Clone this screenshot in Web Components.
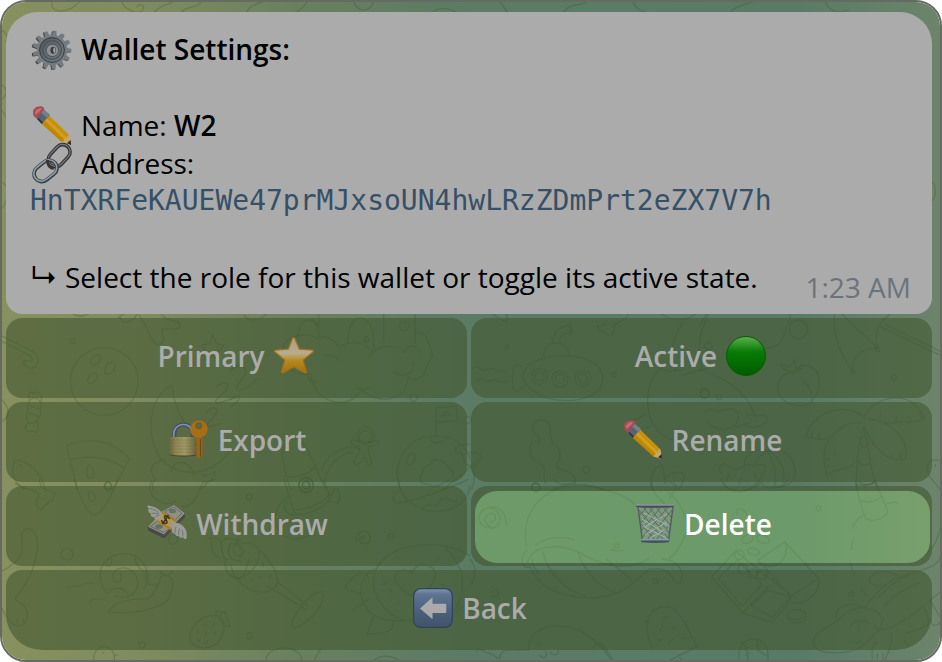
<!DOCTYPE html>
<html lang="en">
<head>
<meta charset="utf-8">
<meta name="viewport" content="width=device-width, initial-scale=1">
<title>Wallet Settings</title>
<style>
  body {
    margin: 0;
    background: #fff;
    font-family: "Open Sans", "DejaVu Sans", sans-serif;
    font-size: 28px;
  }
  .arrow {
    width: 28px;
    font-family: Inter, "Noto Sans CJK JP", sans-serif;
  }
</style>
</head>
<body>

<chat-window>
  <chat-message time="1:23 AM">
    <message-line><emoji-icon name="gear"></emoji-icon><b>Wallet Settings:</b></message-line>
    <message-line></message-line>
    <message-line><emoji-icon name="pencil"></emoji-icon><span>Name: <b>W2</b></span></message-line>
    <message-line><emoji-icon name="link"></emoji-icon><span>Address:</span></message-line>
    <message-line><wallet-address value="HnTXRFeKAUEWe47prMJxsoUN4hwLRzZDmPrt2eZX7V7h"></wallet-address></message-line>
    <message-line></message-line>
    <message-line><span class="arrow">↳</span><span>Select the role for this wallet or toggle its active state.</span></message-line>
  </chat-message>
  <inline-keyboard>
    <keyboard-button>Primary<emoji-icon name="star"></emoji-icon></keyboard-button>
    <keyboard-button>Active<emoji-icon name="circle"></emoji-icon></keyboard-button>
    <keyboard-button><emoji-icon name="lock"></emoji-icon>Export</keyboard-button>
    <keyboard-button><emoji-icon name="pencil"></emoji-icon>Rename</keyboard-button>
    <keyboard-button><emoji-icon name="money"></emoji-icon>Withdraw</keyboard-button>
    <keyboard-button active><emoji-icon name="basket"></emoji-icon>Delete</keyboard-button>
    <keyboard-button wide><emoji-icon name="back"></emoji-icon>Back</keyboard-button>
  </inline-keyboard>
</chat-window>

<script>
  // Repeats a shape around the centre of a 40x40 icon
  function spokes(count, shape) {
    let out = "";
    for (let i = 0; i < count; i++) {
      out += `<g transform="rotate(${(360 / count) * i + 8} 20 20)">${shape}</g>`;
    }
    return out;
  }

  const icons = {
    gear: `
      <defs><linearGradient id="g" x2="1" y2="1"><stop stop-color="#50565b"/><stop offset="1" stop-color="#7b8389"/></linearGradient></defs>
      <g fill="#3f3c39" transform="translate(-1 .6)">${spokes(13, '<path d="M17.6 7 18.4.6h3.2L22.4 7z"/>')}</g>
      <g fill="#737b80">${spokes(13, '<path d="M17.4 7 18.4.6h3.4L22.8 7z"/>')}</g>
      <circle cx="20" cy="20" r="15.2" fill="#747c81"/>
      <circle cx="20" cy="20" r="12.4" fill="url(#g)" stroke="#34383b" stroke-width="1"/>
      <circle cx="20" cy="20" r="9.4" fill="none" stroke="#50575b" stroke-width="1.6"/>
      <circle cx="20.4" cy="20.4" r="6.2" fill="#8b9297" stroke="#40464a" stroke-width=".8"/>
      <ellipse cx="21.2" cy="20.2" rx="2.8" ry="3.5" fill="#3f3833"/>
      <path d="M21.9 17.2c2 1 2.1 4.9.3 6-1.2-1.6-1.4-4.2-.3-6z" fill="#a3a7aa"/>`,
    pencil: `
      <defs><linearGradient id="p" x1="1" y1="0" x2="0" y2="1"><stop stop-color="#d99f14"/><stop offset=".5" stop-color="#c58c06"/><stop offset="1" stop-color="#a66d00"/></linearGradient></defs>
      <path d="M9 17.2 16.6 9 37.4 29.2 30 36.2z" fill="url(#p)"/>
      <path d="m12 13.8 2-2.2 20.8 20-2.1 2z" fill="#d0a021"/>
      <path d="m29.8 36.2 2-1.4.7-2 2.2-.8.6-1.9 2.1-1.1 1.7 10.3z" fill="#c7a66a"/>
      <path d="m35 37.3 3.6-3.4.5 5.1z" fill="#2e2b29"/>
      <path d="m3.8 11.8 7.8-8.4 6.4 5.6-8.4 9z" fill="#5b6369"/>
      <path d="m8.8 6.3 2.8-2.9 6.4 5.6-2.9 3z" fill="#71818e"/>
      <path d="m5.4 13 1-1.1 4.6 4.3-1.4 1.5z" fill="#303438"/>
      <path d="M1 7C.5 2.5 5.5-.7 10.5.7c1.4.8 2 1.8 1.7 3.1l-8 8C2.3 11.3 1.1 9.5 1 7z" fill="#a84a51"/>
      <path d="M3.2 5.5C4.5 3 7.5 1.6 9.8 2c.7.8-5.2 6.8-6.2 6.5-.7-.7-.8-1.7-.4-3z" fill="#c46d70"/>`,
    link: `
      <g fill="none" transform="translate(0 -1)">
        <g transform="rotate(-47 27 13)"><rect x="14.8" y="5.6" width="25" height="14.8" rx="7.4" stroke="#393334" stroke-width="3.6"/><rect x="15" y="5.4" width="25" height="14.8" rx="7.4" stroke="#737a83" stroke-width="1.2"/></g>
        <g transform="rotate(-38 13 28)"><rect x="1" y="20.5" width="25" height="15.5" rx="7.75" stroke="#3d454c" stroke-width="3.8"/><rect x="1" y="20" width="25" height="15.5" rx="7.75" stroke="#93a0aa" stroke-width="1.5"/></g>
        <path d="M15.4 17c.2 4.5 2 8 6.3 8.4" stroke="#3a3334" stroke-width="3"/>
      </g>`,
    star: `
      <defs><linearGradient id="s" x2="0" y2="1"><stop stop-color="#b09b81"/><stop offset=".45" stop-color="#b8ac8e"/><stop offset=".65" stop-color="#b38b20"/><stop offset="1" stop-color="#a56d0c"/></linearGradient></defs>
      <path d="M19.6 1.5c.5 0 1 .5 1.4 1.4l4.2 10.2 13 1.1c1.4.2 1.4 1.2.4 2L29 24.1l3.3 11.3c.3 1.4-.5 1.8-1.5 1.2L20 30.8 9.1 36.6c-1 .6-1.8-.1-1.5-1.2l3.1-11.3L1.2 16c-1-.8-.6-1.7.6-1.8l12.6-1.1L18.2 3c.3-1 .8-1.5 1.4-1.5z" fill="url(#s)" stroke="#a7701f" stroke-width="1.2"/>`,
    circle: `
      <defs><linearGradient id="c" x2="0" y2="1"><stop stop-color="#4ea642"/><stop offset=".4" stop-color="#077b05"/><stop offset="1" stop-color="#005b00"/></linearGradient><linearGradient id="h" x2="0" y2="1"><stop stop-color="#5cac4e"/><stop offset="1" stop-color="#0a7b05" stop-opacity="0"/></linearGradient></defs>
      <circle cx="20" cy="20" r="19.5" fill="url(#c)" stroke="#055d04"/>
      <ellipse cx="20" cy="9.5" rx="14" ry="8" fill="url(#h)"/>`,
    lock: `
      <defs><linearGradient id="l"><stop stop-color="#6e6741"/><stop offset=".2" stop-color="#8f8552"/><stop offset=".55" stop-color="#a09b69"/><stop offset="1" stop-color="#655e38"/></linearGradient></defs>
      <path d="M5.3 18v-4.5c0-12 18.5-12 18.5 0V18" fill="none" stroke="#424e65" stroke-width="4.2"/>
      <path d="M4.8 18v-4.5c0-11 18-12.5 18.3-1" fill="none" stroke="#8291ad" stroke-width="1.6"/>
      <path d="M1 17h27v18c-3 1.8-24 1.8-27 0z" fill="url(#l)"/>
      <path d="M1.5 20h25m-25 3h25m-25 3h25m-25 3h25m-25 3h25" stroke="#6d683f" stroke-opacity=".35" stroke-width="1"/>
      <path d="M1 34.8c5 1.8 22 1.8 27 0" fill="none" stroke="#4d4327" stroke-width="1.2"/>
      <path d="m27.5 16 6 2v19l-2.5 1.4-3.7-2.3v-2l1.2-1-1.2-1.2v-2l1.3-1-1.3-1.2v-2l1.3-1.2-1.3-1z" fill="#9b6516"/>
      <path d="M31.5 19v18" stroke="#704817" stroke-width="1.1"/>
      <path fill-rule="evenodd" d="M30.2.4c5 0 8.6 3.8 8.4 8.8-.2 4.8-3.2 8.4-8.5 8.6-5.4 0-8.7-3.6-8.8-8.3C21.2 4.4 25 .4 30.2.4zm-.5 2.4a3 3 0 1 0 0 6 3 3 0 0 0 0-6z" fill="#a86e16"/>
      <circle cx="29.8" cy="5.8" r="3.1" fill="none" stroke="#735020" stroke-width=".8"/>`,
    money: `
      <path d="M15 8 26.8 1.3 38 8.5v4.8L17.2 34.6 1 26.5v-3.2z" fill="#494949"/>
      <path d="M15 7.5 27 1l11 8.3-21 21.2L1 22.8z" fill="#8d9183"/>
      <path d="M17.5 7.8 27 3l8 6.3L28 16zM3.7 22.4 11 16.7l12.3 7.2-6.5 4.7z" fill="none" stroke="#64695f" stroke-width=".9"/>
      <ellipse cx="25.6" cy="7" rx="3.6" ry="2.3" fill="#687163"/><ellipse cx="12" cy="22.6" rx="3.8" ry="2.4" fill="#686c66"/>
      <path d="M14.7 7.7 30 16.3l-6.4 9.5L9.4 17.5z" fill="#ad985f"/>
      <path d="m14.8 7.6 15.4 8.6-1.3 1.7-15.2-8.6zM10.3 16l15 8.5-1.6 1.6-14.3-8.6z" fill="#b17a16"/>
      <g transform="translate(18.5 15.5) rotate(35)"><path d="M3-2.6c-1.5-1.6-5.5-1.3-5.5.6 0 2.2 5.5 1.6 5.5 4 0 2-4.3 2.4-6 .8M0-5.2V5.4" fill="none" stroke="#423718" stroke-width="1.6"/></g>
      <path d="M15.5 9.8C12.4 4.8 7.8 2.3 1.5 1.4c-2.5 0-.5 2.7 1 3.7C.3 5.3.8 8.1 4 9.7c-1 2 .8 3.7 3.4 3.6-.1 2.3 2.7 3.1 4.8 1.4z" fill="#999b96"/>
      <path d="M3 4.5c3.2.5 5.2 1.6 8.2 3.8M4.5 9.3c2.8.1 4.8-.2 7.6.6M8 13c1.1-1 2.7-1.5 4.2-1.7" fill="none" stroke="#717571"/>
      <path d="M25 18.8c5.5-1 11.3 1.7 14 7.5 1 3.2 1 6.2.4 8.4-1.5 1-2.8-.7-3.6-1.8-1 2-2.7.8-4-1.2-1.4 1.5-3.3-.1-3.9-2.1-2.2.4-3.8-2.1-3.2-4.5z" fill="#999b96"/>
      <path d="M28 29c-.3-2.3.1-4.3 1.2-6.1m2.6 8.2c-.4-3 0-4.5.6-6.6m3.5 8.1c0-2.7 0-4.4-.7-6.6" fill="none" stroke="#70736f"/>`,
    basket: `
      <path d="M3 3 7.5 37h26L38 3" fill="#a8a8b0" fill-opacity=".18" stroke="#555a60" stroke-width="1.4"/>
      <g fill="none" stroke="#65636e" stroke-width="1">
        <path d="m3 5 27 32M5 19l16 18M8 3l25 31M14 3l20 26M21 3l14 18M28 3l8 10M38 5 11 37m24-17L20 37M33 3 7 34M26 3 6 27M19 3 5 20M12 3 4 12"/>
      </g>
      <g fill="none" stroke="#a9b2b9" stroke-width=".9"><path d="m7 15 23 14M8 22l23 12M9 9l25 13M32 10 9 23m23-5L10 31m21-6-16 9"/></g>
      <path d="M5.8 35.5h28.5l-.6 2.8c-7 .8-20 .8-27.3 0z" fill="#43505e"/><path d="M6 35.7h28" stroke="#8c99a8" stroke-width="1.5"/>
      <path d="M1 1h38v1.7c-2.3 1.4-35 1.4-38 0z" fill="#454d56"/><path d="M1 1h38" stroke="#8995a3" stroke-width="1.3"/>`,
    back: `
      <defs><linearGradient id="b" x2="0" y2="1"><stop stop-color="#8397ae"/><stop offset=".14" stop-color="#5e7593"/><stop offset=".55" stop-color="#4c617c"/><stop offset="1" stop-color="#41536b"/></linearGradient></defs>
      <rect x=".6" y=".6" width="38.8" height="38.8" rx="7.5" fill="url(#b)" stroke="#30435d" stroke-width="1.2"/>
      <path d="M7 20.4 19.5 9.3v6.4h13c.5 0 .8.3.8.8v7.8c0 .5-.3.8-.8.8h-13v6.2z" fill="#aaa"/>`
  };

  class EmojiIcon extends HTMLElement {
    constructor() {
      super();
      const shadow = this.attachShadow({ mode: "open" });
      shadow.innerHTML = `
        <style>
          :host { display: block; flex: none; width: 44px; height: 40px; }
          svg { display: block; width: 100%; height: 100%; overflow: visible; }
        </style>
        <svg viewBox="-2 0 44 40" aria-hidden="true">${icons[this.getAttribute("name")] || ""}</svg>
      `;
    }
  }

  class WalletAddress extends HTMLElement {
    constructor() {
      super();
      const shadow = this.attachShadow({ mode: "open" });
      shadow.innerHTML = `
        <style>
          :host { display: block; min-width: 0; }
          code {
            display: block;
            font: 28px/36px "DejaVu Sans Mono", monospace;
            color: #365067;
            overflow-wrap: anywhere;
          }
        </style>
        <code></code>
      `;
      shadow.querySelector("code").textContent = this.getAttribute("value");
    }
  }

  class MessageLine extends HTMLElement {
    constructor() {
      super();
      const shadow = this.attachShadow({ mode: "open" });
      shadow.innerHTML = `
        <style>
          :host {
            display: flex;
            align-items: flex-start;
            gap: 7px;
            min-height: 38px;
            line-height: 36px;
          }
          ::slotted(emoji-icon) { margin: -1px 0; }
        </style>
        <slot></slot>
      `;
      this.querySelectorAll("b").forEach((b) => (b.style.fontWeight = 600));
    }
  }

  class ChatMessage extends HTMLElement {
    constructor() {
      super();
      const shadow = this.attachShadow({ mode: "open" });
      shadow.innerHTML = `
        <style>
          :host {
            display: grid;
            padding: 19px 21px 8px 24px;
            border-radius: 32px 32px 16px 16px;
            background: #ababab;
            color: #000;
          }
          .body, time { grid-area: 1 / 1; }
          .body { padding-bottom: 9px; min-width: 0; }
          time {
            place-self: end;
            color: #6b747c;
            line-height: 38px;
          }
        </style>
        <div class="body"><slot></slot></div>
        <time></time>
      `;
      shadow.querySelector("time").textContent = this.getAttribute("time");
    }
  }

  class KeyboardButton extends HTMLElement {
    constructor() {
      super();
      const shadow = this.attachShadow({ mode: "open" });
      shadow.innerHTML = `
        <style>
          :host {
            --key: rgba(66, 86, 47, 0.58);
            display: grid;
            border-radius: 16px;
            overflow: hidden;
          }
          :host([wide]) {
            grid-column: 1 / -1;
            border-radius: 16px 16px 36px 36px;
          }
          button {
            display: flex;
            align-items: center;
            justify-content: center;
            gap: 7px;
            padding: 18px 0 22px;
            border: 0;
            background: var(--key);
            color: #ababab;
            font: inherit;
            font-weight: 600;
            line-height: 40px;
            cursor: pointer;
          }
          :host([active]) { padding: 5px 2px 3px 4px; }
          :host([active]) button {
            padding: 13px 0 19px;
            border-radius: 22px;
            background: rgba(155, 224, 116, 0.3);
            box-shadow: 0 0 0 16px var(--key);
            color: #fff;
          }
        </style>
        <button type="button"><slot></slot></button>
      `;
    }
  }

  class InlineKeyboard extends HTMLElement {
    constructor() {
      super();
      const shadow = this.attachShadow({ mode: "open" });
      shadow.innerHTML = `
        <style>
          :host {
            display: grid;
            grid-template-columns: 1fr 1fr;
            gap: 4px;
            margin-top: 4px;
          }
        </style>
        <slot></slot>
      `;
    }
  }

  // Doodle wallpaper, drawn in tiles at three times their shown size
  class ChatWallpaper extends HTMLElement {
    constructor() {
      super();
      const shadow = this.attachShadow({ mode: "open" });
      const tile = (x, y, shapes) => `<g transform="translate(${x} ${y}) scale(.33333)">${shapes}</g>`;
      shadow.innerHTML = `
        <style>
          :host {
            display: block;
            background: linear-gradient(90deg, #87905e, #808c60 14%, #68805f 32%, #5b7b65 50%, #597b66 85%, #6c846b);
          }
          svg { display: block; width: 100%; height: 100%; }
          g { fill: none; stroke: #284b1e; stroke-width: 4; stroke-linecap: round; stroke-linejoin: round; }
          svg > g { stroke-opacity: 0.24; }
        </style>
        <svg viewBox="0 0 942 662" preserveAspectRatio="xMidYMid slice" aria-hidden="true">
          ${tile(0, 0, `
            <path d="M152 0c-8 25 18 38 55 22 20-12 25-22 30-22M360 0c10 22 40 40 60 30 16-12 0-30-14-14M455 38c20-30 48-25 60-38M600 0c-12 25-50 10-62 38M735 38c8-26 34-30 55-38M920 0c-10 20-30 32-44 38M1060 0c10 34 50 34 60 0M1290 38c20-22 60-22 84 0M1500 0l26 38M1690 38c18-40 60-20 70-38M1900 0c8 20 30 34 60 38M2190 38c10-20 50-30 80-38M2480 0c10 30 40 38 70 26M0 88c14 8 18 20 12 34M0 250c16 14 18 30 0 44M0 330c10 8 14 20 14 32M0 545c22 6 18 60 0 78M2800 540c18 20 16 60-10 66"/>
          `)}
          ${tile(0, 310, `
            <circle cx="308" cy="215" r="102"/><circle cx="213" cy="93" r="8"/>
            <ellipse cx="282" cy="150" rx="12" ry="18" transform="rotate(45 282 150)"/><ellipse cx="325" cy="175" rx="13" ry="21" transform="rotate(35 325 175)"/><ellipse cx="272" cy="206" rx="11" ry="18" transform="rotate(40 272 206)"/>
            <path d="M0 94 80 134c20 14 8 24-6 18-14-2-12 14 2 20 34 14 42-26 20-46L0 78M200 0c24 26 52 20 70 4M355 20c8 26 38 18 52-8M380 5c-10 8-26 10-30 20M412 14c30 36 38 90 58 90 28-4 12-34 10-44 12-10 60 6 56-16-2-20-38 0-60-38"/>
            <path d="M78 296c-4-40 38-38 40-10 2 38-14 58-36 54-12-6-6-24-4-44zM84 270c-10-16 0-30 12-18 10-12 28-2 22 22M80 338c-20 20-4 32 12 26 12 10 24-4 14-28M80 286l36 14M78 308l34 14M0 270c22 22 26 52 0 64"/>
            <path d="m197 420-2-10c54-26 130-26 188 36l-6 14M197 420l30 120M377 460l-42 80M206 450c56-14 110-10 160 24"/><path d="M262 466c12 8 24 40 6 40-20 0-14-26-6-40zM318 516c12 6 18 20 8 24-18 2-24-14-8-24z"/>
            <path d="M130 540c-10-50-64-96-92-86-18 40 6 72 30 86M56 466v4"/>
            <path d="M510 228C440 260 430 380 480 450c60 60 150 50 210-28M512 230c8 60 30 130 100 150M490 450c-50 10-46 40-26 60-18 8-8 30-10 30M510 488c0-40 62-40 68 10M600 494c14 16 34-10 42-6-2 30-30 28-40 52"/>
            <path d="m602 106 24-6 8-26 12 26 22 6-16 18 2 28-22-14-20 12 2-24zM645 232c30-24 44-14 28 12l-30 30c-4 18 40-8 64-10M690 180l40-20M616 306c28-22 42-10 24 14l-24 26c4 16 30-6 46-4"/>
          `)}
          ${tile(230, 310, `
            <path d="M40 16c14 22 52 16 72-12M200 80c10-70 64-60 64-20M205 62c8-44 54-42 58 0M264 0v80M352 100c-2-100 70-100 78-10v28M460 0v92M555 0v100"/><circle cx="408" cy="88" r="7"/><circle cx="522" cy="48" r="14"/>
            <path d="M156 112c20-48 96-40 104-26 24-14 54 6 64 26 46-28 84-10 104 16 28-24 76-26 94 0 10-30 36-24 46 0M415 144c14-34 60-38 76-34M160 110c-20 50 24 90 78 82M240 190c6 90 116 120 154 48 40 50 140 40 140-42M235 192c-10 10 4 28 22 24M282 138c20-6 36 0 42 14M375 232c10 12 36 6 42 2M490 185c20 24 66 10 58-26M555 68c40-8 34 30 48 50 12 30-12 36-16 60-8 38-48 36-54 18"/>
            <path d="M0 180c14-28 60-10 40 18L18 230c-2 16 32 14 60-24M0 270c10-16 38-14 20 4L0 292"/><circle cx="550" cy="264" r="11"/>
            <path d="M618 384v-90l62-4 2 42-64 6M634 318l14-14 14 12-28 4"/><circle cx="712" cy="332" r="11"/>
            <circle cx="405" cy="378" r="26"/><circle cx="405" cy="382" r="19"/><path d="M388 396c-14 4-20-10-26-2-4 10 14 20 24 16v20c-14 12-10 28-16 30 4 12 22 6 32-20 10 4 0 26 18 28 6-10-2-30-6-38V410c14 2 34-8 30-16-10-6-18 6-28 4"/>
            <path d="M510 540c-30-80 20-160 104-162 60 0 96 34 106 70M600 384c-2 20 44 22 46 0M530 460c0-30 24-36 26-20 0 14-22 38-26 20zM570 500c14-14 0-28 32-36 10-24 46-10 48 6 28 8 20 40 4 46-22-2-20 20-46 16-20-16-44 0-38-32zM720 404c-30-2-54 10-40 24 30 2 14 40 40 40M640 540l80-66"/>
            <path d="M155 430c0-40 50-70 80 0l50 110M155 430c0 30 10 80 26 110M160 500c40 8 80-6 102-40M274 480c20-60 80-76 120-60M282 520c8-50 40-86 84-92"/><circle cx="226" cy="526" r="22"/><circle cx="226" cy="526" r="11"/>
          `)}
          ${tile(470, 310, `
            <path d="M160 200c0-80 240-90 240 6 0 90-220 90-240-6zM222 138c0-50 72-56 76 0M250 96c2-26 14-44 28-44l24-8 4 28-20-2c-12 2-18 16-18 24M158 170c-34-20-30 20-30 64 10 24 34-6 40-8M10 176c16-16 24 14 46 2 18-10 20 14 54 6M22 212c16-14 20 12 42 0 20-8 18 10 46 4"/>
            <circle cx="209" cy="200" r="24"/><circle cx="209" cy="200" r="14"/><circle cx="271" cy="207" r="24"/><circle cx="271" cy="207" r="14"/><circle cx="340" cy="206" r="24"/><circle cx="340" cy="206" r="14"/><circle cx="112" cy="112" r="6"/><circle cx="433" cy="195" r="7"/>
            <path d="M485 0c-8 24-40 40-52 44 8 30-18 40-24 26-8-10-30-4-24-22 16 6 10-10 26-6M68 12l42 26 2-26M564 0c36 40 92 34 120 8"/>
            <path d="M640 40c-40 60-40 120-20 140M570 180c-60 60-40 190 40 210M560 160c4 24 50 28 76 20M480 330c20 4 40-10 50-20M480 358c30 2 60-4 76-14M720 14c-40 60-30 130-20 166M640 196l80-22"/><circle cx="708" cy="252" r="13"/>
            <path d="M188 360c-2-40 60-40 54 10 0 40 24 30 30 64 0 30-30 36 14 50 30 8 34 24 30 40M188 360c10 24 26 20 20 40-38-16-34 44-10 54 44 16 16 44 30 68"/><circle cx="350" cy="480" r="10"/><circle cx="198" cy="534" r="13"/>
            <path d="M552 540c-20-30 0-60 26-76l12 60c-14-30 40-44 54-30 2 20-6 34-14 46M0 430c20-2 40 4 30 20-14 10-14 30-30 20M0 470c16 20 16 50 4 70M250 540c30-20 110-20 150 0"/>
          `)}
          ${tile(700, 310, `
            <path d="M0 178c70 24 140 60 168 136M200 114c60 4 58-60 74-86 0-24 0-28 0-28M0 50 28 4M410 0c-12 80 20 140 52 182 0-40 30-70 72-66M430 10c30 40 70 60 108 106-12-40 0-80 40-106M546 50l180 86M560 44l166 80"/><circle cx="300" cy="58" r="28"/><circle cx="463" cy="186" r="6"/><circle cx="538" cy="118" r="7"/><circle cx="587" cy="204" r="8"/><circle cx="17" cy="252" r="13"/><circle cx="60" cy="262" r="8"/><circle cx="28" cy="108" r="11"/>
            <path d="M280 190c-60 0-60 92 18 98 70 0 76-90 50-110-24-18-46-12-62 4M312 208c16 20 28 30 28 66M244 164l30 8 14-22 4 28 20-2-28 14-28-12z"/>
            <path d="M14 312c10-10 18-18 40-8 20 2 30-10 50-6 40 20-8 100-80 40M142 316c10-6 30 8 38 2 40-6 28 16 12 26-10 10-40 12-50 2M110 354c12-6 24-8 40-14"/>
            <path d="M498 322c-60-44-150-20-176 58 30 16 50 4 72 8-30 40-16 84-8 110 20-24 60-10 80-36M486 340c-40-6-70 20-92 48M498 320c30-60 140-90 180 4-20 20-70 10-100 16-28 0-50-10-80-14M510 326c60 8 120 50 114 120-50 20-100-30-126-96M496 352c-20 60-20 120-22 188M498 356c14 60 16 130 40 184M340 368v16M362 372v14M382 446l14 8M378 468l14 4M406 430l10 10M548 312l-4 12M594 322v12M630 318l6 10M664 312l6 10M578 432v12M608 428v16M478 386c14 8 16 0 24-14M484 406c10 10 20 10 30-4M476 456c14 14 30 12 40 4M478 512c14 20 40 16 50 4"/>
            <path d="M64 490c-8-40 20-28 40-10 20 4 20-20 60-12 40-8 40 4 28 30-40 62-90 60-116 30M136 480c-6-40 30-70 70-56 60-20 100 46 76 90-20 24-40 20-62 18M172 462c4-20 20-30 34-38 24 40 26 70 22 106M212 424c30 24 50 50 42 94M90 492l-6 20M126 506l-4 16M166 492l8 16"/>
            <path d="M726 454c-30-10-46 10-34 44l34 42M712 466v6"/>
          `)}
          ${tile(0, 480, `
            <path d="M218 0c14 50 40 110 62 108 30-12 50-66 70-108M262 38c10-12 30 20 12 28-16 2-14-18-12-28zM316 8c22-4 10 32-2 24-10-4-6-14 2-24zM40 12c30 22 70 16 72 40-20 24 0 44 8 38 10-20 40-24 40-50-28-14-40 0-48-40M450 6c-20 50 40 80 72 60M540 80c40 14 60-60 64-70l40-10"/>
            <path d="M60 160c50-50 80 80-20 198 0 14 40 14 36 56-4 30-36 36-50 14-14-20-20-20-26-40M58 162c4 40 10 70-30 96-10 10-20 14-28 18M46 434v-12M66 432l-2-10"/><circle cx="196" cy="225" r="18"/><circle cx="515" cy="181" r="14"/>
            <path d="M318 344c-50-60-10-120 50-120 60-4 90 70 60 104M340 352c60 20 88-40 56-72-30-26-64-10-62 18 8 26 36 6 22-14M434 264c-6 70 10 50 32 52 0 20-20 46-34 44-40 0-90 6-112 38 40 10 150 0 180-36 20-40 20-60-2-74-30 0-18 20-32 40M402 232c-4 20 14 44 30 44M320 346c6-24 50-24 58 0M308 248c6 20 26 22 22-16M492 290l-16-12M500 290l16-14M200 330c10-20 30 0 40-10 10-10 20-8 36-8M264 370c10-22 18 2 46-12"/>
            <path d="M566 482c0-40 30-70 68-72 50 0 40 58 10 88-30 16-68 12-78-16zM646 408c-4-10 4-16 12-8 24-6 16 20 30 42-20 6-32-16-36-30M672 398l-20 16M590 456v8M614 434l-2 8M640 434l-4 8M616 460l-2 8M644 460l-4 8M590 484l6 4M620 484l-2 8"/><circle cx="422" cy="499" r="9"/>
            <path d="M276 546c-2-60 70-52 62 0M338 530h10M304 522v2M620 180c20-10 30 0 42 8 14-20 30-4 58-4M630 188c0 40 14 40 26 48M660 190c0 30 10 56 20 50M675 240c-10 30 10 60 45 60M686 196c-10 30 0 50 34 50"/>
          `)}
          ${tile(230, 480, `
            <path d="m160 0 30 104c40 8 90-18 110-50L276 0M190 92c30 0 80-14 104-44M300 54c20-60 34 0 24 18-20-4-24-4-34-8M180 50c-60 20-66 120 10 130 40 0 60-20 70-40M190 110c-30-10-40-30-20-46M504 0c10 120 200 130 216 20M504 36c-30 20-10 40 10 34 60-10 160-50 200-70M576 88c30-30 30 10 50-18 24-34 34 6 54-4"/><circle cx="226" cy="18" r="22"/><circle cx="226" cy="18" r="11"/><circle cx="55" cy="53" r="9"/><circle cx="55" cy="471" r="9"/><circle cx="482" cy="171" r="8"/>
            <path d="M378 186c-4-40 44-40 42-4-6 20-34 14-32-4 4-8 10-6 12 0"/>
            <path d="M720 230c-90-60-280-40-290 70-8 50 40 110 90 124 80 10 140 0 200-60M432 270c-60 30-50 110 0 140 30 16 60 16 90 16M644 204c60 60 70 120 30 190M546 352c-90-50-44-100 0-70 10-40 80-30 68 16-8 30-30 34-68 54zM414 300c-8-40-50-10-70 24 10 20 30 10 50 20M430 408l-20 60c30-4 90-2 78-44M366 394l50-34M456 316l16-4M476 332l10 8M500 376l10-10M614 250l14-14M630 316l16 4"/>
            <path d="M0 260c10 40 40 80 100 80 60-10 50-60-16-130C60 184 20 190 0 194M20 300c30-8 70-40 64-86M0 290c24 16 40 10 54-50M8 208c0-20 20-12 18 0 20 0 12 20-2 24-14-2-20-20-16-24zM20 170c0 14-4 20 0 30M140 310c60 40 74 60 90 70M126 332c60 34 70 44 100 60M274 340c-30-10-100 80-90 104 30 14 110-70 90-104zM66 300l-8 8M92 292l-8 4M120 288l-4 8M96 250v12M110 322l8 4"/>
            <path d="M106 546c0-50 104-52 108 0M270 510l-20 36M430 546c24-20 50-16 80 0"/>
          `)}
          ${tile(470, 480, `
            <path d="M170 200C150 80 240 10 350 20c70 10 120 30 150 58M172 214c-24 16-20 60 10 50 20 60 100 100 200 92 100-10 120-60 162-88M172 252c20-60 100-60 160-30 60 34 140 60 208 16M200 196c34-24 80-24 114-14M220 218c10 60 70 120 130 134M326 216c10 50 60 110 114 126M410 240l70 56M188 240c0 20 10 34 18 42M544 270c70-10 60 40 84 44 24-24 10-70-50-74M600 60c40-60 20-30-8-60M550 0c-10 40 20 54 44 82M424 212c8 4 24 2 36 4M600 40c80 80 60 140 0 200M60 130c30-4 14-40-6-24-20 14 0 42 20 40 30-20 16-60-20-60-40 10-34 60 10 62M110 140c0-30-10-56-50-58"/><circle cx="441" cy="201" r="7"/><circle cx="198" cy="24" r="12"/><circle cx="560" cy="307" r="8"/><circle cx="75" cy="343" r="11"/><path d="M0 240c20 20 20 60 0 80M250 0c20 20 60 20 66 0"/>
            <path d="M176 516c-10-90 160-120 250 30M372 510c4-20 20-24 30-10l30 46M20 516c10-14 20 10 40 8 14 0 20 20 30 16 0-40 40-20 90-28M200 500c10-8 10-8 16-2M208 530c10 10 30 10 20-12M240 520c10 14 30 10 26-8"/>
            <path d="M550 510c-40-90 0-140 60-122 30 20 50 70 74 116L600 546M628 530l12 16M556 400l-8-10M614 400l8-12M540 430l-10-2M650 430l8-4M660 476l8-4M580 418l16-4M580 440l-6 14M606 446h14M642 478h10M600 490l12-10M566 486l10-4"/>
          `)}
          ${tile(700, 480, `
            <path d="M470 0c10 50 20 100 34 120 20 8 60 0 64-24L530 0M478 16c20 4 40 0 54-8M486 66c24 4 50 0 62-14M564 74c10-4 20-6 36-4M464 146c4-20 16-30 30-36M464 182l-6 30M456 250c2 20 8 30 12 38M486 328l20 24M66 0c20 50 100 40 120 6 10 34 80 20 80-6"/><circle cx="360" cy="88" r="7"/><circle cx="459" cy="346" r="7"/>
            <path d="m38 294 72-78 170 136-20 34-40 44-86-26zM58 298l56-54 76 72-60 66zM158 380l50-46 68 20-56 62zM178 244l80-56 102 110c10 40-40 90-90 70M180 244l96 110M262 190c10 60-40 90-84 60M280 350l78-50M210 320l-36 50M130 404l80-84"/><circle cx="122" cy="228" r="14"/><circle cx="132" cy="270" r="15"/><circle cx="163" cy="284" r="14"/><circle cx="190" cy="286" r="15"/><ellipse cx="146" cy="180" rx="18" ry="12" transform="rotate(-25 146 180)"/><ellipse cx="192" cy="180" rx="20" ry="12" transform="rotate(20 192 180)"/><ellipse cx="164" cy="218" rx="18" ry="10" transform="rotate(15 164 218)"/><path d="M116 106c-12-24 14-24 28 0M266 408c10-24 50-18 56-2v16c-10 14-50 14-56-4zM268 416c14 8 40 10 54-4"/>
            <path d="M344 496c0-40 40-40 84-80 20-20 60-40 90-24 40 10 44 50 14 70-30 30-30 44-80 56-50 10-100 4-108-22zM414 416c-8-40 60-50 84-28C510 370 560 310 600 296c60-20 120-30 126-60M514 312c-4-40 60-40 88-20M514 306c10 20 40 14 50 10M540 356c30-30 50-50 90-66M560 382c30-40 60-50 104-70M530 440c10 40 100-20 144-56 14 10 16 30 18 50-10 14-40 20-70 30M580 466c4 30-10 56-20 76M522 540c0-20-4-40 14-52M536 540l2-14M554 540v-14M616 482l16 22M726 340l-30 24 30 50M700 420c-10 20 20 26 26 10M726 150c-10 40-20 60-60 90M456 444c10-20 40-24 54-12M480 440v12M460 490c14 6 20 4 28-6M376 498v2"/>
            <path d="M120 546c-10-80 90-90 88-10v10M128 492c14 8 20 30 18 54M178 482c-10 20 0 40 30 50M144 506l-8 8M150 524l-8 6M180 500l10-4M176 516l10 4"/>
          `)}
        </svg>
      `;
    }
  }

  class ChatWindow extends HTMLElement {
    constructor() {
      super();
      const shadow = this.attachShadow({ mode: "open" });
      shadow.innerHTML = `
        <style>
          :host {
            display: block;
            position: relative;
            isolation: isolate;
            overflow: hidden;
            padding: 10px 8px 10px 4px;
            border: 2px solid #656b61;
            border-radius: 26px;
          }
          chat-wallpaper {
            position: absolute;
            inset: 0;
            z-index: -1;
          }
        </style>
        <chat-wallpaper></chat-wallpaper>
        <slot></slot>
      `;
    }
  }

  customElements.define("emoji-icon", EmojiIcon);
  customElements.define("wallet-address", WalletAddress);
  customElements.define("message-line", MessageLine);
  customElements.define("chat-message", ChatMessage);
  customElements.define("keyboard-button", KeyboardButton);
  customElements.define("inline-keyboard", InlineKeyboard);
  customElements.define("chat-wallpaper", ChatWallpaper);
  customElements.define("chat-window", ChatWindow);
</script>
</body>
</html>
